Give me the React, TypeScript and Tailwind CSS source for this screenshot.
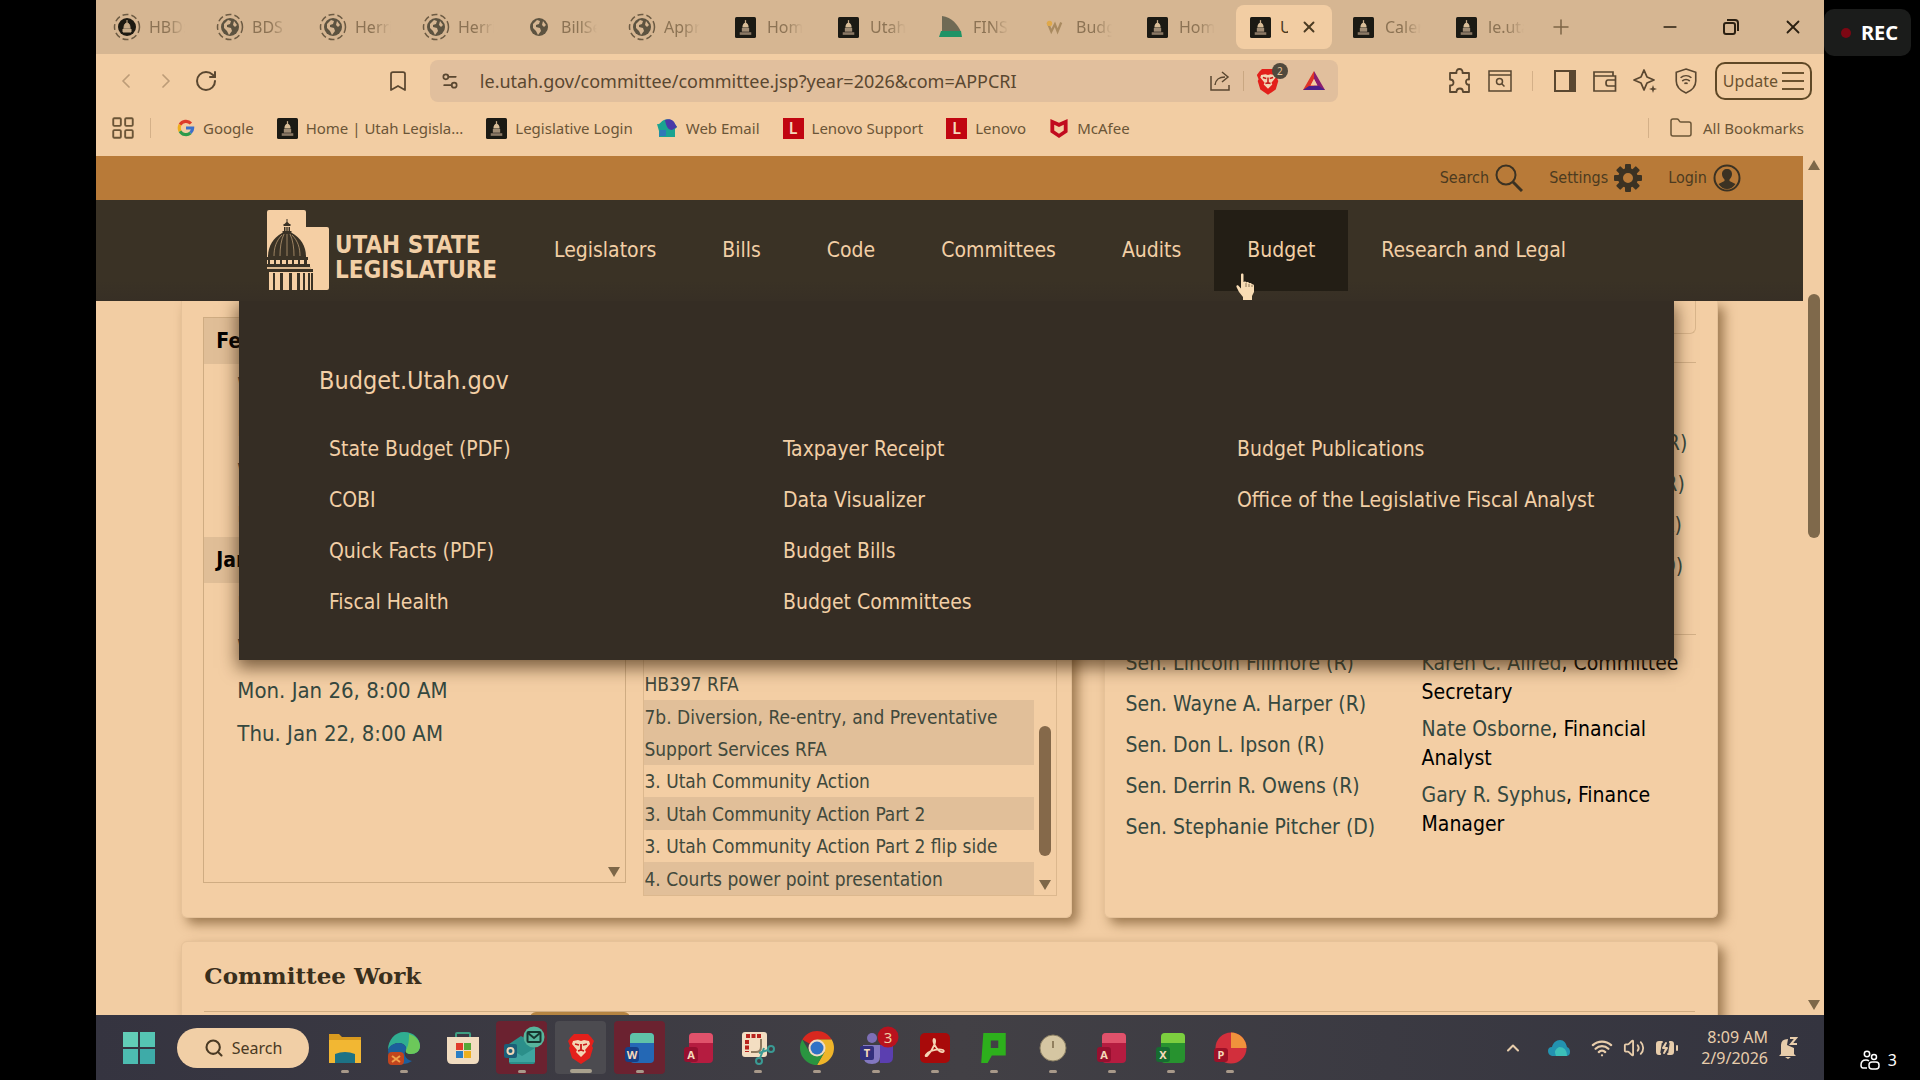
import type { ReactNode } from 'react';
import {
  BatteryCharging,
  Bookmark,
  ChevronLeft,
  ChevronRight,
  ChevronUp,
  Folder,
  LayoutGrid,
  Minus,
  Plus,
  RotateCw,
  Search,
  Settings2,
  Volume2,
  Wifi,
  X,
} from 'lucide-react';

const UI = 'font-["Noto_Sans","Open_Sans",sans-serif]';
const SITE = 'font-["DejaVu_Sans_Condensed","DejaVu_Sans",Tahoma,sans-serif]';

/* ---------- small drawings ---------- */

function CapitolIcon() {
  return (
    <svg viewBox="0 0 20 20" className="size-[21px] shrink-0">
      <rect width="20" height="20" rx="1.5" fill="#1b1a14" />
      <path d="M10 3v3" stroke="#c9ad8a" strokeWidth="1.2" />
      <path d="M7 10c0-3 1.500-4.500 3-4.500s3 1.500 3 4.500z" fill="#d8bd98" />
      <path d="M6.500 10.500h7V14h-7z" fill="#a08c74" />
      <path d="M4.500 14.500h11V17h-11z" fill="#8b7965" />
    </svg>
  );
}

function GlobeIcon({ ring = true, capitol = false }: { ring?: boolean; capitol?: boolean }) {
  return (
    <svg viewBox="0 0 28 28" className="size-7 shrink-0">
      {ring && <circle cx="14" cy="14" r="12.500" fill="none" stroke="#6d5b43" strokeWidth="1.500" strokeDasharray="6 3" />}
      <circle cx="14" cy="14" r="9" fill={capitol ? '#1d1a12' : '#5d5340'} />
      {capitol ? (
        <path d="M14 7v3M11 15c0-3 1-5 3-5s3 2 3 5zM10 16h8v3h-8z" fill="#c9ad8a" stroke="#c9ad8a" />
      ) : (
        <path d="M8 11l4-4 3 1-1 3-3 1v2l4 1 1 3-3 4-2-4-3-3zM18 8l3 4-2 2-2-2z" fill="#d6b692" />
      )}
    </svg>
  );
}

function FinsIcon() {
  return (
    <svg viewBox="0 0 24 22" className="h-[22px] w-6 shrink-0">
      <path d="M3 0c10 1 16 9 19 16H3z" fill="#6f6a55" />
      <path d="M2 15h20l1 6H0z" fill="#1f9366" />
    </svg>
  );
}

function BudIcon() {
  return (
    <svg viewBox="0 0 20 20" className="size-[18px] shrink-0">
      <path d="M3 5l4 10 4-8 3 8 4-10" fill="none" stroke="#a98a60" strokeWidth="2.500" />
      <circle cx="5" cy="6" r="3" fill="#e0a94a" />
    </svg>
  );
}

function GoogleG() {
  return (
    <svg viewBox="0 0 20 20" className="size-[18px] shrink-0" fill="none" strokeWidth="3.500">
      <path d="M15.500 5A7.500 7.500 0 0 0 3.400 6.500" stroke="#dd3b2a" />
      <path d="M3.400 6.500a7.500 7.500 0 0 0 0 7" stroke="#efae1c" />
      <path d="M3.400 13.500a7.500 7.500 0 0 0 11.500 2" stroke="#2c9a4a" />
      <path d="M14.900 15.500a7.500 7.500 0 0 0 2.500-5.500H10" stroke="#3d70c9" />
    </svg>
  );
}

function WebEmailIcon() {
  return (
    <svg viewBox="0 0 22 20" className="h-5 w-[22px] shrink-0">
      <path d="M1 6c3 1 4-3 7-4 4-2 9 0 11 4l2 3-2 2v8H3v-6z" fill="#1aa391" />
      <path d="M9 2c4-2 9 0 10 4l2 3-5 3c-4 0-6-4-7-10z" fill="#4a39a8" />
      <path d="M4 12h6v6H3z" fill="#2f79b8" />
    </svg>
  );
}

function LenovoIcon() {
  return (
    <span className="flex size-[21px] shrink-0 items-center justify-center bg-[#c10510] text-base leading-5 font-semibold text-[#f5d9bb]">
      L
    </span>
  );
}

function McAfeeIcon() {
  return (
    <svg viewBox="0 0 20 22" className="h-[21px] w-5 shrink-0">
      <path d="M1 1l9 4 9-4v14l-9 6-9-6zM5 7v6l5 3.500 5-3.500V7l-5 2.500z" fill="#c10b1f" fillRule="evenodd" />
    </svg>
  );
}

function BraveLion({ className = 'h-8 w-7' }: { className?: string }) {
  return (
    <svg viewBox="0 0 28 32" className={className}>
      <path d="M7 2h14l3 3 3 4-2 5 1 2-3 10-9 6-9-6L2 16l1-2-2-5 3-4z" fill="#e3201b" />
      <path d="M6 9l5-1 3 1 3-1 5 1 1 3-5 6 1 2-5 5-5-5 1-2-5-6z" fill="#f3d6b5" />
      <path d="M8 12l4 1M20 12l-4 1M14 12v6M11 19l3-1 3 1" stroke="#c91a17" strokeWidth="1.800" />
    </svg>
  );
}

function TriangleLogo() {
  return (
    <svg viewBox="0 0 24 22" className="h-[22px] w-6">
      <path d="M12 1L1 20h11V14l-3 1 3-6z" fill="#dd3327" />
      <path d="M12 1v8l3 6-3-1v6h11z" fill="#8a1d6f" />
      <path d="M1 20l6-4h10l6 4z" fill="#4b1f8a" />
      <path d="M12 9l3.500 6.500h-7z" fill="#f2cda3" />
    </svg>
  );
}

function PuzzleIcon() {
  return (
    <svg viewBox="0 0 24 26" className="h-[26px] w-6" fill="none" stroke="currentColor" strokeWidth="1.800" strokeLinejoin="round">
      <path d="M2 5h6.500C8 2.500 9.500 1 11.500 1S15 2.500 14.500 5H21v6.500c-2.500-.5-3 1-3 2.500s1 3 3 2.500V24h-6c0-2.500-1.500-3.500-3-3.500S8.500 21.500 8.500 24H2v-6.500c2.500 0 3.500-1 3.500-3S4.500 11.500 2 11.500z" />
    </svg>
  );
}

function UtahLogo() {
  return (
    <svg viewBox="0 0 62 80" className="h-20 w-[62px] shrink-0">
      <path d="M2 0h35q2 0 2 2v15h21q2 0 2 2v59q0 2-2 2H0V2q0-2 2-2z" fill="#f5cfa4" />
      <g fill="#3a3225">
        <path d="M19.500 9h1v3l2 2h-5l2-2zM16.500 14h7v2h-7zM17 17h1.500v4H17zM19.300 17h1.400v4h-1.400zM21.500 17H23v4h-1.500zM15.500 21h9v2h-9z" />
        <path d="M15 23h10c9 5 14 13 14 24H1c0-11 5-19 14-24z" />
        <path d="M0 47h41v3H0zM0 54h43v3H0zM0 59h46v3H0z" />
        <path d="M1 50h2v4H1zM7 50h2v4H7zM13 50h2v4h-2zM19 50h2v4h-2zM25 50h2v4h-2zM31 50h2v4h-2zM37 50h3v4h-3z" />
        <path d="M0 62h2v18H0zM6 63h2v17H6zM13 63h3v17h-3zM22 63h3v17h-3zM30 63h3v17h-3zM36 63h2v17h-2zM41 63h2v17h-2zM44 63h2v17h-2z" />
      </g>
      <g stroke="#b59771" strokeWidth=".8" fill="none">
        <path d="M20 24v22M17 24c-3 6-4 14-4 22M23 24c3 6 4 14 4 22M15 25c-6 6-8 13-8 21M25 25c6 6 8 13 8 21M0 58h44" />
      </g>
    </svg>
  );
}

function GearIcon() {
  return (
    <svg viewBox="0 0 28 28" className="size-7">
      <g fill="#3b3223">
        {[0, 45, 90, 135, 180, 225, 270, 315].map((deg) => (
          <rect key={deg} x="11" y="0" width="6" height="7" rx="1" transform={`rotate(${deg} 14 14)`} />
        ))}
      </g>
      <circle cx="14" cy="14" r="7.500" fill="none" stroke="#3b3223" strokeWidth="5" />
    </svg>
  );
}

function ProfileIcon() {
  return (
    <svg viewBox="0 0 28 28" className="size-7">
      <circle cx="14" cy="14" r="12.500" fill="none" stroke="#3b3223" strokeWidth="2" />
      <path d="M14 5c3 0 5 2 5 5 0 2-1 4-2.500 5.500V17l6 3c-2 3-5 5-8.500 5s-6.500-2-8.500-5l6-3v-1.500C10 14 9 12 9 10c0-3 2-5 5-5z" fill="#3b3223" />
    </svg>
  );
}

function HandCursor() {
  return (
    <svg viewBox="0 0 20 27" className="absolute top-[63px] left-[22px] h-[27px] w-5">
      <path
        d="M5 1.500c0-1.500 2.500-1.500 2.500 0V9c1-1 2.500-.5 2.800.5 1-.8 2.500-.4 2.800.8 1-.8 2.500-.2 2.800 1 1-.5 2.100.1 2.100 1.500V19l-2 4v4H7v-3l-4-5-2.500-5c-.5-1.500 1-2.200 2-1.200L5 15.500z"
        fill="#f8dcb4"
      />
      <path d="M10 10v4M13 11v3M16 12v2" stroke="#6f5b42" strokeWidth=".8" />
    </svg>
  );
}

function Arrow({ up = false }: { up?: boolean }) {
  return (
    <svg viewBox="0 0 14 11" className="h-[11px] w-3.5 shrink-0">
      <path d={up ? 'M7 0l6 10H1z' : 'M1 0h12L7 10z'} fill="#7d6748" />
    </svg>
  );
}

/* ---------- browser chrome ---------- */

type Tab = { label: string; icon: ReactNode; active?: boolean };

const tabs: Tab[] = [
  { label: 'HBD:', icon: <GlobeIcon capitol /> },
  { label: 'BDS', icon: <GlobeIcon /> },
  { label: 'Herri', icon: <GlobeIcon /> },
  { label: 'Herri', icon: <GlobeIcon /> },
  { label: 'BillSe', icon: <GlobeIcon ring={false} /> },
  { label: 'Appr', icon: <GlobeIcon /> },
  { label: 'Hom', icon: <CapitolIcon /> },
  { label: 'Utah', icon: <CapitolIcon /> },
  { label: 'FINS', icon: <FinsIcon /> },
  { label: 'Budg', icon: <BudIcon /> },
  { label: 'Hom', icon: <CapitolIcon /> },
  { label: 'U', icon: <CapitolIcon />, active: true },
  { label: 'Caler', icon: <CapitolIcon /> },
  { label: 'le.uta', icon: <CapitolIcon /> },
];

function TabStrip() {
  return (
    <div className="flex h-[54px] shrink-0 items-center gap-[7px] bg-[#d6b692] pl-[7px]">
      {tabs.map((tab, i) => (
        <div
          key={i}
          className={
            tab.active
              ? 'flex h-11 w-24 shrink-0 items-center rounded-lg bg-[#f2cda3] px-3 text-[#4a3a22]'
              : 'flex h-11 w-24 shrink-0 items-center px-3 text-[#8c7354]'
          }
        >
          <span className="flex w-6 shrink-0 items-center justify-center">{tab.icon}</span>
          <button
            className={
              tab.active
                ? 'ml-2 w-2 overflow-hidden text-left text-base whitespace-nowrap'
                : 'ml-2.5 w-9 overflow-hidden mask-r-from-50% text-left text-base whitespace-nowrap'
            }
          >
            {tab.label}
          </button>
          {tab.active && (
            <button aria-label="Close tab" className="ml-3">
              <X className="size-[18px]" strokeWidth={2.5} />
            </button>
          )}
        </div>
      ))}
      <button aria-label="New tab" className="ml-1 text-[#7d6546]">
        <Plus className="size-6" strokeWidth={1.5} />
      </button>
      <div className="ml-auto flex items-center gap-[42px] pr-5 text-[#2b2012]">
        <button aria-label="Minimize">
          <Minus className="size-5" />
        </button>
        <button aria-label="Restore">
          <svg viewBox="0 0 18 18" className="size-[18px]" fill="none" stroke="currentColor" strokeWidth="2">
            <rect x="2" y="5" width="11" height="11" rx="2" />
            <path d="M5 2h8q3 0 3 3v8" />
          </svg>
        </button>
        <button aria-label="Close">
          <X className="size-[22px]" />
        </button>
      </div>
    </div>
  );
}

function Toolbar() {
  return (
    <div className="flex h-[54px] shrink-0 items-center text-[#5a4730]">
      <div className="flex items-center gap-4 pl-[18px]">
        <button aria-label="Back" className="text-[#bd9c78]">
          <ChevronLeft className="size-6" strokeWidth={1.75} />
        </button>
        <button aria-label="Forward" className="text-[#bd9c78]">
          <ChevronRight className="size-6" strokeWidth={1.75} />
        </button>
        <button aria-label="Reload">
          <RotateCw className="size-6" />
        </button>
      </div>
      <button aria-label="Bookmark this page" className="mr-5 ml-auto">
        <Bookmark className="size-6" strokeWidth={1.75} />
      </button>
      <div className="mr-[110px] flex h-[42px] w-[908px] items-center rounded-lg bg-[#e1bf9d] pr-3 pl-2.5">
        <Settings2 className="size-5 shrink-0" />
        <input
          aria-label="Address"
          className="ml-5 min-w-0 flex-1 bg-transparent text-lg text-[#5a4730] outline-none"
          defaultValue="le.utah.gov/committee/committee.jsp?year=2026&com=APPCRI"
        />
        <button aria-label="Share">
          <svg viewBox="0 0 22 22" className="size-[22px]" fill="none" stroke="currentColor" strokeWidth="1.500">
            <path d="M2 6v14h18v-5" />
            <path d="M6 15c1-6 4-8 10-8M13 2l6 5-6 5" />
          </svg>
        </button>
        <span className="mx-3 h-5 w-px bg-[#c9a782]" />
        <button aria-label="Brave Shields" className="relative mr-[22px]">
          <BraveLion className="h-7 w-6" />
          <span className="absolute -top-1 -right-2 flex size-4 items-center justify-center rounded-full bg-[#50493d] text-[10px] text-[#e6c59c]">
            2
          </span>
        </button>
        <button aria-label="Rewards">
          <TriangleLogo />
        </button>
      </div>
      <div className="flex items-center gap-4 pr-3">
        <button aria-label="Extensions">
          <PuzzleIcon />
        </button>
        <button aria-label="Search tabs">
          <svg viewBox="0 0 24 24" className="size-6" fill="none" stroke="currentColor" strokeWidth="1.500">
            <path d="M1 2h22v20H1zM1 6h22" />
            <circle cx="11.500" cy="12.500" r="3" />
            <path d="M14 15l2.500 2.500" />
          </svg>
        </button>
        <span className="mx-1 h-5 w-px bg-[#d4b088]" />
        <button aria-label="Sidebar">
          <svg viewBox="0 0 24 24" className="size-6" fill="none" stroke="currentColor" strokeWidth="2">
            <path d="M2 2h20v20H2z" />
            <path d="M17 2h5v20h-5z" fill="currentColor" />
          </svg>
        </button>
        <button aria-label="Wallet">
          <svg viewBox="0 0 24 24" className="size-6" fill="none" stroke="currentColor" strokeWidth="1.700">
            <path d="M1 3h19v4h2.500v15H1zM1 7h20" />
            <path d="M22.500 11H15q-2 0-2 3t2 3h7.500" />
          </svg>
        </button>
        <button aria-label="Leo AI">
          <svg viewBox="0 0 24 24" className="size-6" fill="none" stroke="currentColor" strokeWidth="1.800" strokeLinejoin="round">
            <path d="M11 1l3 7 7 3-7 3-3 7-3-7-7-3 7-3z" />
            <path d="M20 16l1 3 3 1-3 1-1 3-1-3-3-1 3-1z" fill="currentColor" strokeWidth="0" />
          </svg>
        </button>
        <button aria-label="VPN">
          <svg viewBox="0 0 24 24" className="size-[26px]" fill="none" stroke="currentColor" strokeWidth="1.500">
            <path d="M12 1l9 3v8c0 5-4 9-9 11-5-2-9-6-9-11V4z" />
            <path d="M7 9c3-2.500 7-2.500 10 0M8.500 12c2-1.600 5-1.600 7 0M10.500 14.500c1-.7 2-.7 3 0" />
          </svg>
        </button>
        <button className="flex h-[38px] items-center gap-1 rounded-[10px] border-2 border-[#5f4826] px-1.5 text-base text-[#6b522f]">
          Update
          <svg viewBox="0 0 22 18" className="h-[18px] w-[22px]" stroke="currentColor" strokeWidth="2">
            <path d="M0 1h22M0 9h22M0 17h22" />
          </svg>
        </button>
      </div>
    </div>
  );
}

const bookmarks = [
  { label: 'Google', icon: <GoogleG /> },
  { label: 'Home | Utah Legisla...', icon: <CapitolIcon /> },
  { label: 'Legislative Login', icon: <CapitolIcon /> },
  { label: 'Web Email', icon: <WebEmailIcon /> },
  { label: 'Lenovo Support', icon: <LenovoIcon /> },
  { label: 'Lenovo', icon: <LenovoIcon /> },
  { label: 'McAfee', icon: <McAfeeIcon /> },
];

function BookmarksBar() {
  return (
    <div className="flex h-12 shrink-0 items-center pb-2 text-[15px] text-[#6b5537]">
      <button aria-label="All apps" className="ml-3.5">
        <LayoutGrid className="size-[26px]" strokeWidth={1.75} />
      </button>
      <span className="mx-3.5 h-5 w-px bg-[#d4b088]" />
      <nav className="ml-3 flex items-center gap-[23px]">
        {bookmarks.map((item) => (
          <a key={item.label} href="#" className="flex items-center gap-2 whitespace-nowrap">
            {item.icon}
            {item.label}
          </a>
        ))}
      </nav>
      <span className="ml-auto h-5 w-px bg-[#d4b088]" />
      <button className="mr-5 ml-5 flex items-center gap-2.5">
        <Folder className="size-6" strokeWidth={1.5} />
        All Bookmarks
      </button>
    </div>
  );
}

/* ---------- site ---------- */

const navItems = ['Legislators', 'Bills', 'Code', 'Committees', 'Audits', 'Budget', 'Research and Legal'];

const budgetMenu = [
  ['State Budget (PDF)', 'COBI', 'Quick Facts (PDF)', 'Fiscal Health'],
  ['Taxpayer Receipt', 'Data Visualizer', 'Budget Bills', 'Budget Committees'],
  ['Budget Publications', 'Office of the Legislative Fiscal Analyst'],
];

function SiteHeader() {
  return (
    <header className="relative z-10 text-[#f2cfa6]">
      <div className="flex h-11 items-center justify-end gap-[26px] bg-[#b87a38] pr-[62px] text-base text-[#4c3a20]">
        <a href="#" className="flex items-center gap-1.5">
          Search
          <svg viewBox="0 0 28 28" className="size-7" fill="none" stroke="#3b3223">
            <circle cx="11" cy="11" r="9.500" strokeWidth="2" />
            <path d="M18 18l9 9" strokeWidth="3" />
          </svg>
        </a>
        <a href="#" className="flex items-center gap-1.5">
          Settings
          <GearIcon />
        </a>
        <a href="#" className="flex items-center gap-1.5">
          Login
          <ProfileIcon />
        </a>
      </div>

      <div className="relative z-10 flex h-[101px] items-start bg-linear-to-b from-[#3a3225] from-80% to-[#372f25] pt-[10px] pl-[171px]">
        <a href="#" className="flex w-[254px] shrink-0 items-center gap-1.5">
          <UtahLogo />
          <span className="pt-4 text-2xl leading-[25px] font-bold whitespace-nowrap">
            UTAH STATE
            <br />
            LEGISLATURE
          </span>
        </a>
        <nav className="flex text-[21px]">
          {navItems.map((item) => (
            <a
              key={item}
              href="#"
              className={
                item === 'Budget'
                  ? 'relative flex h-[81px] items-center bg-[#231e15] px-[33px] whitespace-nowrap'
                  : 'flex h-[81px] items-center px-[33px] whitespace-nowrap'
              }
            >
              {item}
              {item === 'Budget' && <HandCursor />}
            </a>
          ))}
        </nav>
      </div>

      <div className="absolute top-full right-[129px] left-[143px] bg-[#352d24] pt-[60px] pb-8 shadow-[0_6px_16px_2px_rgba(60,35,10,0.65)]">
        <h2 className="pl-20 text-[25px] leading-10">
          <a href="#">Budget.Utah.gov</a>
        </h2>
        <div className="mt-[23px] grid grid-cols-[1fr_1fr_437px] pl-[90px] text-[21px] leading-[51px]">
          {budgetMenu.map((column, i) => (
            <ul key={i}>
              {column.map((item) => (
                <li key={item}>
                  <a href="#">{item}</a>
                </li>
              ))}
            </ul>
          ))}
        </div>
      </div>
    </header>
  );
}

const months = [
  { name: 'February', dates: ['Wed. Feb 11, 8:00 AM', 'Mon. Feb 9, 8:00 AM', 'Wed. Feb 4, 8:00 AM', 'Mon. Feb 2, 8:00 AM'] },
  { name: 'January', dates: ['Fri. Jan 30, 8:00 AM', 'Wed. Jan 28, 8:00 AM', 'Mon. Jan 26, 8:00 AM', 'Thu. Jan 22, 8:00 AM'] },
];

const materials = [
  'HB397 RFA',
  '7b. Diversion, Re-entry, and Preventative Support Services RFA',
  '3. Utah Community Action',
  '3. Utah Community Action Part 2',
  '3. Utah Community Action Part 2 flip side',
  '4. Courts power point presentation',
];

const senators = [
  'Sen. Lincoln Fillmore (R)',
  'Sen. Wayne A. Harper (R)',
  'Sen. Don L. Ipson (R)',
  'Sen. Derrin R. Owens (R)',
  'Sen. Stephanie Pitcher (D)',
];

const representatives = [
  'Rep. Stephanie I. Gricius (R)',
  'Rep. Katherine Lisonbee (R)',
  'Rep. Matthew H. Gwynn (R)',
  'Rep. Rosemary I. Lesser (D)',
];

const staff = [
  { name: 'Karen C. Allred', role: 'Committee Secretary' },
  { name: 'Nate Osborne', role: 'Financial Analyst' },
  { name: 'Gary R. Syphus', role: 'Finance Manager' },
];

const CARD = 'border border-[#e6c299] bg-[#f3cea4] shadow-[6px_6px_12px_rgba(100,65,25,0.6)]';

function MeetingsCard() {
  return (
    <section className={`${CARD} grid grid-cols-[423fr_413fr] gap-[17px] rounded-b-md border-t-0 pt-4 pr-[14px] pb-[21px] pl-[21px]`}>
      <div className="relative h-[566px] border border-[#cfac82]">
        {months.map((month) => (
          <div key={month.name} className="pb-px">
            <h3 className="bg-[#e0be97] pl-3 text-[21px] leading-[46px] font-bold text-black">{month.name}</h3>
            <ul className="pl-[33px] text-[22px] leading-[43px] text-[#35483f]">
              {month.dates.map((date) => (
                <li key={date}>
                  <a href="#">{date}</a>
                </li>
              ))}
            </ul>
          </div>
        ))}
        <span className="absolute right-1 bottom-1">
          <Arrow />
        </span>
      </div>
      <div className="flex h-[579px] items-end border border-[#dcb88e]">
        <ul className="flex-1 text-[19px] leading-8 text-[#41493c]">
          {materials.map((item) => (
            <li key={item} className="even:bg-[#e1bf99] even:pt-px">
              <a href="#">{item}</a>
            </li>
          ))}
        </ul>
        <div className="flex w-[22px] flex-col items-center pb-1">
          <span className="h-[130px] w-3 rounded-full bg-[#85694a]" />
          <span className="mt-6">
            <Arrow />
          </span>
        </div>
      </div>
    </section>
  );
}

function MembersCard() {
  return (
    <section className={`${CARD} rounded-b-md border-t-0 px-[21px] text-[21px] text-[#35483f]`}>
      <div className="h-[33px] rounded-b-md border border-t-0 border-[#d9b58b]" />
      <div className="mt-7 grid grid-cols-[296px_1fr] border-t border-[#d3b087] pt-[60px]">
        <div />
        <ul className="leading-[41px]">
          {representatives.map((name) => (
            <li key={name} className="whitespace-nowrap">
              <a href="#">{name}</a>
            </li>
          ))}
        </ul>
      </div>
      <div className="mt-[47px] grid grid-cols-[296px_1fr] border-t border-[#d3b087] pt-2">
        <ul className="leading-[41px]">
          {senators.map((name) => (
            <li key={name} className="whitespace-nowrap">
              <a href="#">{name}</a>
            </li>
          ))}
        </ul>
        <ul className="flex flex-col gap-2 pt-1.5 leading-[29px]">
          {staff.map((person) => (
            <li key={person.name} className="text-black">
              <a href="#" className="text-[#35483f]">
                {person.name}
              </a>
              , {person.role}
            </li>
          ))}
        </ul>
      </div>
    </section>
  );
}

function SitePage() {
  return (
    <div className={`${SITE} flex min-w-0 flex-1 flex-col overflow-hidden bg-[#f2cda3]`}>
      <SiteHeader />
      <main className="mx-auto w-[90%]">
        <div className="grid grid-cols-[890fr_614fr] gap-8">
          <MeetingsCard />
          <MembersCard />
        </div>
        <section className={`${CARD} mt-[23px] h-40 rounded-t-md px-[22px] pt-[15px]`}>
          <h2 className='font-["DejaVu_Serif",serif] text-[23px] leading-[38px] font-bold text-[#3a2f1c]'>
            Committee Work
          </h2>
          <div className="mt-4 border-t border-[#cfac82] pl-[326px]">
            <div className="h-8 w-[100px] rounded-t-md bg-[#b58442]" />
          </div>
        </section>
      </main>
    </div>
  );
}

/* ---------- taskbar ---------- */

function OfficeIcon({ letter, top, mid, dark }: { letter: string; top: string; mid: string; dark: string }) {
  return (
    <svg viewBox="0 0 32 32" className="size-8">
      <rect x="6" y="1" width="24" height="30" rx="4" fill={mid} />
      <path d="M10 1h16q4 0 4 4v6H6V5q0-4 4-4z" fill={top} />
      <rect x="1" y="15" width="14" height="15" rx="3" fill={dark} />
      <text x="8" y="26.500" textAnchor="middle" fontSize="11" fontWeight="700" fill="#f5d9bb">
        {letter}
      </text>
    </svg>
  );
}

const apps: { name: string; icon: ReactNode; tile?: 'alert' | 'active'; idle?: boolean }[] = [
  {
    name: 'File Explorer',
    icon: (
      <svg viewBox="0 0 34 32" className="h-8 w-[34px]">
        <path d="M1 2h10l3 3h19v26H1z" fill="#d99a1f" />
        <path d="M1 8h32v23H1z" fill="#f2b733" />
        <path d="M7 22q10-4 20 0v9H7z" fill="#1d7285" />
      </svg>
    ),
  },
  {
    name: 'Edge',
    icon: (
      <svg viewBox="0 0 34 34" className="size-[34px]">
        <path d="M17 1c10 0 16 7 16 14 0 5-4 8-9 8-4 0-6-2-5-4 1-4-3-7-7-7-5 0-9 3-11 7C1 9 8 1 17 1z" fill="#2fae91" />
        <path d="M22 3c7 2 11 7 11 12 0 5-4 8-9 8-4 0-6-2-5-4 3-5 3-11 3-16z" fill="#6cc85a" />
        <path d="M1 19c2-5 6-7 11-7 4 0 8 3 7 7-3 3-1 10 6 11-3 2-6 3-9 3C8 33 1 27 1 19z" fill="#1c5f9c" />
        <rect x="1" y="21" width="16" height="13" rx="4" fill="#c2451e" />
        <path d="M5 25l8 6M13 25l-8 6" stroke="#f0a04a" strokeWidth="2" />
      </svg>
    ),
  },
  {
    name: 'Microsoft Store',
    idle: true,
    icon: (
      <svg viewBox="0 0 34 34" className="size-[34px]">
        <path d="M10 8V3q0-1 1-1h12q1 0 1 1v5" fill="none" stroke="#3f9f82" strokeWidth="2" />
        <path d="M1 6h32v22q0 5-5 5H6q-5 0-5-5z" fill="#f1dcc0" />
        <path d="M10 12h7v7h-7z" fill="#e03b2b" />
        <path d="M18 12h7v7h-7z" fill="#54a838" />
        <path d="M10 20h7v7h-7z" fill="#2b7fc4" />
        <path d="M18 20h7v7h-7z" fill="#eeb01f" />
      </svg>
    ),
  },
  {
    name: 'Outlook',
    tile: 'alert',
    icon: (
      <svg viewBox="0 0 42 40" className="-mt-1 ml-1 h-10 w-[42px]">
        <path d="M6 18l12-8 14 8v18q0 2-2 2H8q-2 0-2-2z" fill="#2b8f8a" />
        <path d="M6 22l13 8 13-8v14H6z" fill="#3fa5a0" />
        <rect x="1" y="18" width="13" height="14" rx="2" fill="#1b5f78" />
        <circle cx="7.500" cy="25" r="3" fill="none" stroke="#f0d6b6" strokeWidth="2" />
        <circle cx="31" cy="11" r="10.500" fill="#57b59c" />
        <rect x="24.500" y="6" width="13" height="10" rx="1" fill="none" stroke="#17362f" strokeWidth="2" />
        <path d="M25 7l6 5 6-5" fill="none" stroke="#17362f" strokeWidth="2" />
      </svg>
    ),
  },
  { name: 'Brave', tile: 'active', icon: <BraveLion /> },
  { name: 'Word', tile: 'alert', icon: <OfficeIcon letter="W" top="#5fc3a8" mid="#2468b5" dark="#153f87" /> },
  { name: 'Access', idle: true, icon: <OfficeIcon letter="A" top="#e0526b" mid="#b51c40" dark="#96102f" /> },
  {
    name: 'Snipping Tool',
    icon: (
      <svg viewBox="0 0 34 34" className="size-[34px]">
        <rect x="1" y="1" width="25" height="25" rx="3" fill="#f3dec2" />
        <path d="M5 5h15M6 9v12" fill="none" stroke="#b8231d" strokeWidth="4" strokeDasharray="4 1.500" />
        <path d="M20 8v8q0 5-5 5h-5" fill="none" stroke="#8f7b60" strokeWidth="2" />
        <g fill="none" stroke="#3a9a94" strokeWidth="2">
          <circle cx="30" cy="18" r="3" />
          <circle cx="18" cy="30" r="3" />
          <path d="M27 19l-9 3M19 27l4-10" />
        </g>
      </svg>
    ),
  },
  {
    name: 'Chrome',
    icon: (
      <svg viewBox="0 0 34 34" className="size-[34px]">
        <path d="M17 17L2.300 8.500A17 17 0 0 1 31.700 8.500H17z" fill="#d8281f" />
        <path d="M17 8.500h14.700A17 17 0 0 1 17 34l7.400-12.700z" fill="#efb52a" />
        <path d="M2.300 8.500l7.300 12.700L17 25.500 17 34A17 17 0 0 1 2.300 8.500zM17 34l7.400-12.700L17 25z" fill="#2a9440" />
        <circle cx="17" cy="17" r="8.500" fill="#f0dcc3" />
        <circle cx="17" cy="17" r="6.500" fill="#2f72c6" />
      </svg>
    ),
  },
  {
    name: 'Teams',
    icon: (
      <svg viewBox="0 0 40 40" className="-mt-1 ml-1.5 size-10">
        <circle cx="13" cy="12" r="5" fill="#7d6fb5" />
        <circle cx="26" cy="14" r="4" fill="#5a4a9c" />
        <path d="M21 19h13v12q0 6-6 6h-7z" fill="#5b3fb0" />
        <path d="M4 19h17v12q0 7-8 7-9 0-9-9z" fill="#8378c0" />
        <rect x="1" y="20" width="14" height="14" rx="2" fill="#33307c" />
        <text x="8" y="31" textAnchor="middle" fontSize="11" fontWeight="700" fill="#f5d9bb">
          T
        </text>
        <circle cx="29" cy="11" r="10.500" fill="#b9121e" />
        <text x="29" y="16.500" textAnchor="middle" fontSize="15" fill="#f0cda4">
          3
        </text>
      </svg>
    ),
  },
  {
    name: 'Acrobat',
    icon: (
      <svg viewBox="0 0 32 32" className="size-8">
        <rect x="1" y="1" width="30" height="30" rx="5" fill="#a80a0a" />
        <path d="M15 7c3 0 0 10-7 17-3 1-1-3 4-5 4-1.500 9-2 12-1 2 1 0 3-3 1.500C17 17 13 9 15 7z" fill="none" stroke="#f5d5b5" strokeWidth="1.800" />
      </svg>
    ),
  },
  {
    name: 'PaperCut',
    icon: (
      <svg viewBox="0 0 26 30" className="h-8 w-7">
        <path d="M3 1h21v21H11l-4 7H1L3 1zm7 7v7h7V8z" fill="#2db01c" fillRule="evenodd" />
      </svg>
    ),
  },
  {
    name: 'Clock',
    icon: (
      <svg viewBox="0 0 28 28" className="size-7">
        <circle cx="14" cy="14" r="13" fill="#d5c6a2" stroke="#8c8064" strokeWidth="1" />
        <path d="M14 7v7" stroke="#7b6848" strokeWidth="1.500" />
      </svg>
    ),
  },
  { name: 'Access 2', icon: <OfficeIcon letter="A" top="#e0526b" mid="#b51c40" dark="#96102f" /> },
  { name: 'Excel', icon: <OfficeIcon letter="X" top="#7ccf3f" mid="#27922f" dark="#176b31" /> },
  {
    name: 'PowerPoint',
    icon: (
      <svg viewBox="0 0 34 34" className="size-[34px]">
        <circle cx="18" cy="17" r="15.500" fill="#d22f3c" />
        <path d="M18 1.500A15.500 15.500 0 0 1 33.500 17H18z" fill="#f0923c" />
        <rect x="1" y="17" width="14" height="14" rx="3" fill="#9c1128" />
        <text x="8" y="28" textAnchor="middle" fontSize="11" fontWeight="700" fill="#f5d9bb">
          P
        </text>
      </svg>
    ),
  },
];

function Taskbar() {
  return (
    <footer className="flex h-[65px] shrink-0 items-center bg-linear-to-r from-[#353440] via-[#424045] to-[#34343f] text-[#e8cdab]">
      <button aria-label="Start" className="ml-[27px] grid size-8 grid-cols-2 gap-0.5">
        <span className="bg-[#62cdb7]" />
        <span className="bg-[#55c5b3]" />
        <span className="bg-[#4dbcb0]" />
        <span className="bg-[#3eaba8]" />
      </button>
      <button className="ml-[22px] flex h-10 w-[132px] items-center justify-center gap-2 rounded-full bg-[#f1cfa6] text-base text-[#4a3a24]">
        <Search className="size-5" strokeWidth={2.5} />
        Search
      </button>
      <div className="ml-1.5 flex">
        {apps.map((app) => (
          <button key={app.name} aria-label={app.name} className="relative flex h-[65px] w-[59px] items-center justify-center">
            {app.tile === 'alert' && <span className="absolute inset-x-1 inset-y-1.5 rounded bg-[#6b2230]" />}
            {app.tile === 'active' && <span className="absolute inset-x-1 inset-y-1.5 rounded bg-[#4c4b50]" />}
            <span className="relative">{app.icon}</span>
            {app.tile === 'active' ? (
              <span className="absolute bottom-[7px] h-1 w-[22px] rounded-full bg-[#a9a18e]" />
            ) : (
              !app.idle && <span className="absolute bottom-[7px] h-[3px] w-2 rounded-full bg-[#a8998a]" />
            )}
          </button>
        ))}
      </div>
      <div className="mr-[26px] ml-auto flex items-center">
        <ChevronUp className="mr-6 size-5" strokeWidth={2.5} />
        <svg viewBox="0 0 24 18" className="mr-5 h-[18px] w-6">
          <path d="M5 17q-4-1-4-5t4-4c1-4 4-7 8-7s6 3 7 7q3 1 3 5t-4 4z" fill="#2393b0" />
          <path d="M12 8q8 0 8 9H9q-3-6 3-9z" fill="#3cc0b8" />
        </svg>
        <Wifi className="mr-2.5 size-[22px]" strokeWidth={2.5} />
        <Volume2 className="mr-2.5 size-[22px]" />
        <BatteryCharging className="size-6 fill-[#e8cdab]" />
        <div className="ml-[22px] text-right text-base leading-[21px]">
          <div>8:09 AM</div>
          <div>2/9/2026</div>
        </div>
        <svg viewBox="0 0 20 22" className="ml-2.5 h-[22px] w-5" fill="#e8cdab">
          <path d="M3 17V8q0-6 7-6l-1 6 7 3v6l2 2H1zM7 20h6l-3 2z" />
          <path d="M12 1h6l-5 6h6" fill="none" stroke="#e8cdab" strokeWidth="2" />
        </svg>
      </div>
    </footer>
  );
}

function App() {
  return (
    <div className={`${UI} flex h-screen overflow-hidden bg-black`}>
      <div className="w-24 shrink-0" />
      <div className="flex min-w-0 flex-1 flex-col bg-[#f2cda3]">
        <TabStrip />
        <Toolbar />
        <BookmarksBar />
        <div className="flex min-h-0 flex-1">
          <SitePage />
          <div className="flex w-[21px] shrink-0 flex-col items-center pt-1 pb-1">
            <Arrow up />
            <span className="mt-[123px] h-[244px] w-3 rounded-full bg-[#7f694b]" />
            <span className="mt-auto">
              <Arrow />
            </span>
          </div>
        </div>
        <Taskbar />
      </div>
      <div className="flex w-24 shrink-0 flex-col justify-between pt-[9px] pb-2 text-white">
        <div className="flex h-[47px] w-[87px] items-center gap-2.5 rounded-[10px] bg-[#1b1c1b] pl-[17px] text-xl font-bold">
          <span className="size-2.5 rounded-full bg-[#7d0713]" />
          REC
        </div>
        <div className="flex items-center justify-end gap-2 pr-[23px] text-base">
          <svg viewBox="0 0 20 20" className="size-5" fill="none" stroke="currentColor" strokeWidth="1.500">
            <circle cx="7" cy="4" r="2.700" />
            <circle cx="14" cy="7" r="2.500" />
            <path d="M7 18H3q-2 0-2-3 0-5 5-5 2 0 3 1" />
            <rect x="9" y="12" width="10" height="7" rx="3" />
          </svg>
          3
        </div>
      </div>
    </div>
  );
}

export default App;
